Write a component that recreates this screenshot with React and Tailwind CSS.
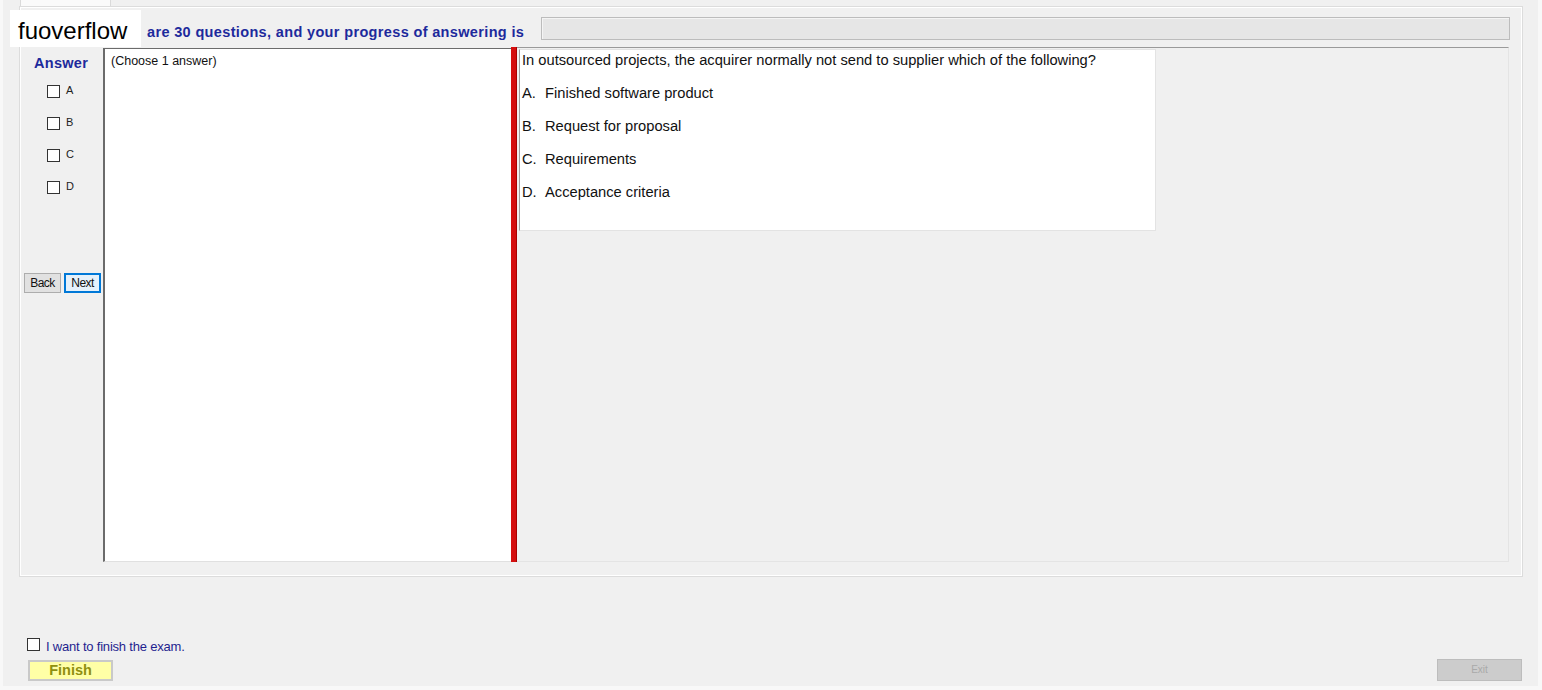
import React from "react";

const options = [
  { key: "A", text: "Finished software product" },
  { key: "B", text: "Request for proposal" },
  { key: "C", text: "Requirements" },
  { key: "D", text: "Acceptance criteria" },
];

function Box({ className = "" }) {
  return <span className={"inline-block h-[13px] w-[13px] border border-[#333] bg-white " + className} />;
}

export default function App() {
  return (
    <div className="relative h-[690px] w-[1542px] overflow-hidden bg-[#f8f8f8] font-['Liberation_Sans',Arial,sans-serif] text-black">
      <div className="ml-[3px] flex h-[686px] w-[1535px] flex-col bg-[#f0f0f0]">
        {/* tab */}
        <div className="ml-[17px] h-[6px] w-[91px] border-x border-[#dadada] bg-[#fafafa]" />

        {/* group box */}
        <div className="ml-[16px] flex h-[571px] w-[1504px] flex-col border border-[#dcdcdc] shadow-[inset_1px_1px_0_#ffffff,inset_-1px_-1px_0_#ffffff]">
          {/* header */}
          <div className="flex h-[40px] items-start">
            <div className="mt-[16px] w-[521px] shrink-0 pl-[127px] text-[14.5px] font-bold leading-[18px] tracking-[0.35px] text-[#1d2a9c] whitespace-nowrap">
              are 30 questions, and your progress of answering is
            </div>
            <div className="mt-[10px] h-[23px] w-[969px] border border-[#bcbcbc] bg-[#e6e6e6] shadow-[inset_1px_1px_0_#f4f4f4]" />
          </div>

          {/* main */}
          <div className="flex h-[515px]">
            {/* answer column */}
            <div className="flex w-[83px] flex-col">
              <div className="mt-[8px] pl-[14px] text-[14.5px] font-bold leading-[17px] tracking-[0.3px] text-[#1d2a9c]">Answer</div>
              <div className="mt-[13px] flex flex-col gap-[19px] pl-[27px]">
                {options.map((o) => (
                  <div key={o.key} className="flex h-[13px] items-center gap-[6px]">
                    <Box />
                    <span className="text-[11px] leading-[13px] -mt-[2px] text-[#222]">{o.key}</span>
                  </div>
                ))}
              </div>
              <div className="mt-[79px] flex gap-[3px] pl-[4px]">
                <button className="h-[20px] w-[37px] border border-[#adadad] bg-[#e1e1e1] text-[12px] leading-[18px] tracking-[-0.6px] text-[#111]">Back</button>
                <button className="h-[20px] w-[37px] border-2 border-[#0078d7] bg-[#e5f1fb] text-[12px] leading-[16px] tracking-[-0.6px] text-[#111]">Next</button>
              </div>
            </div>

            {/* middle panel */}
            <div className="mt-[1px] h-[514px] w-[408px] border-l-2 border-t border-[#6b6b6b] border-b border-b-[#e0e0e0] bg-white">
              <div className="mt-[5px] pl-[6px] text-[12.5px] leading-[14px] text-[#111]">(Choose 1 answer)</div>
            </div>

            {/* splitter */}
            <div className="h-[515px] w-[6px] bg-[#d40f0f] shadow-[inset_-1px_0_0_#a80000]" />

            {/* right panel */}
            <div className="h-[515px] w-[992px] border-t border-[#9a9a9a] border-r border-r-[#e4e4e4] border-b border-b-[#e4e4e4] bg-[#f0f0f0] pl-[2px] pt-[1px]">
              <div className="h-[182px] w-[637px] border border-[#e3e3e3] border-l-[#a0a0a0] bg-white pl-[2px] pt-[2px] text-[14.7px] leading-[17px] text-[#111]">
                <div>In outsourced projects, the acquirer normally not send to supplier which of the following?</div>
                <div className="mt-[16px] flex flex-col gap-[16px]">
                  {options.map((o) => (
                    <div key={o.key} className="flex">
                      <span className="w-[23px]">{o.key}.</span>
                      <span>{o.text}</span>
                    </div>
                  ))}
                </div>
              </div>
            </div>
          </div>
        </div>

        {/* footer */}
        <div className="flex flex-1 items-end justify-between pb-[5px] pl-[24px] pr-[16px]">
          <div className="flex flex-col">
            <div className="flex items-center gap-[6px]">
              <Box />
              <span className="mt-[5px] text-[13px] leading-[14px] tracking-[-0.2px] text-[#1f1f8f]">I want to finish the exam.</span>
            </div>
            <button className="ml-[1px] mt-[6px] h-[21px] w-[85px] border-2 border-[#c9c9c9] bg-[#ffffa6] text-[14.5px] font-bold leading-[17px] text-[#8f8f10]">Finish</button>
          </div>
          <button className="h-[22px] w-[85px] border border-[#bdbdbd] bg-[#cccccc] text-[10px] leading-[20px] text-[#a9a9a9]">Exit</button>
        </div>
      </div>

      {/* watermark overlay */}
      <div className="absolute left-[10px] top-[10px] flex h-[37px] w-[131px] items-center bg-white pl-[8px] pt-[5px] text-[24px] leading-none text-black">
        fuoverflow
      </div>
    </div>
  );
}
